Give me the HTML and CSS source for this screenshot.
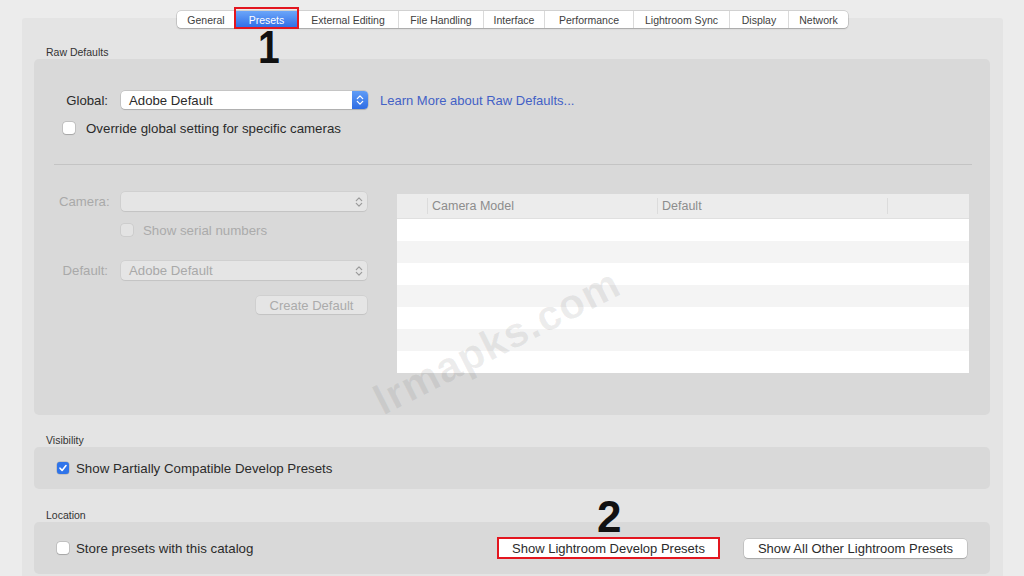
FILE: index.html
```html
<!DOCTYPE html>
<html>
<head>
<meta charset="utf-8">
<link rel="stylesheet" href="styles.css">
</head>
<body>
<div class="page">
  <div class="tabs">
    <div class="tab w-general">General</div>
    <div class="tab active w-presets">Presets</div>
    <div class="tab w-ext">External Editing</div>
    <div class="tab w-file">File Handling</div>
    <div class="tab w-iface">Interface</div>
    <div class="tab w-perf">Performance</div>
    <div class="tab w-sync">Lightroom Sync</div>
    <div class="tab w-disp">Display</div>
    <div class="tab w-net">Network</div>
  </div>
  <div class="window">
    <div class="section-label">Raw Defaults</div>
    <div class="group raw">
      <div class="global-row">
        <span class="lbl">Global:</span>
        <div class="select primary">
          <span class="sel-text">Adobe Default</span>
          <span class="stepper blue"><svg width="8" height="12" viewBox="0 0 8 12"><path d="M1.3 4.6 L4 1.9 L6.7 4.6 M1.3 7.4 L4 10.1 L6.7 7.4" fill="none" stroke="#fff" stroke-width="1.3" stroke-linecap="round" stroke-linejoin="round"/></svg></span>
        </div>
        <span class="link">Learn More about Raw Defaults...</span>
      </div>
      <div class="check-row override"><span class="cb"></span><span>Override global setting for specific cameras</span></div>
      <div class="sep"></div>
      <div class="cameras">
        <div class="cam-form">
          <span class="lbl dis">Camera:</span>
          <div class="select disabled">
            <span class="sel-text"></span>
            <span class="stepper"><svg width="8" height="12" viewBox="0 0 8 12"><path d="M1.3 4.6 L4 1.9 L6.7 4.6 M1.3 7.4 L4 10.1 L6.7 7.4" fill="none" stroke="#9a9a9a" stroke-width="1.2" stroke-linecap="round" stroke-linejoin="round"/></svg></span>
          </div>
          <span></span>
          <div class="check-row serial dis"><span class="cb dis-cb"></span><span>Show serial numbers</span></div>
          <span class="lbl dis def-lbl">Default:</span>
          <div class="select disabled def-sel">
            <span class="sel-text">Adobe Default</span>
            <span class="stepper"><svg width="8" height="12" viewBox="0 0 8 12"><path d="M1.3 4.6 L4 1.9 L6.7 4.6 M1.3 7.4 L4 10.1 L6.7 7.4" fill="none" stroke="#9a9a9a" stroke-width="1.2" stroke-linecap="round" stroke-linejoin="round"/></svg></span>
          </div>
          <span></span>
          <div class="btn-row"><div class="btn dis-btn">Create Default</div></div>
        </div>
        <div class="table">
          <div class="thead">
            <div class="th c0"></div>
            <div class="th c1">Camera Model</div>
            <div class="th c2">Default</div>
            <div class="th c3"></div>
          </div>
          <div class="tr"></div>
          <div class="tr alt"></div>
          <div class="tr"></div>
          <div class="tr alt"></div>
          <div class="tr"></div>
          <div class="tr alt"></div>
          <div class="tr"></div>
        </div>
      </div>
    </div>
    <div class="section-label vis-label">Visibility</div>
    <div class="group vis">
      <div class="check-row"><span class="cb checked"><svg width="10" height="10" viewBox="0 0 10 10"><path d="M2 5.2 L4.1 7.4 L8 2.6" fill="none" stroke="#fff" stroke-width="1.6" stroke-linecap="round" stroke-linejoin="round"/></svg></span><span>Show Partially Compatible Develop Presets</span></div>
    </div>
    <div class="section-label loc-label">Location</div>
    <div class="group loc">
      <div class="check-row"><span class="cb"></span><span>Store presets with this catalog</span></div>
      <div class="loc-buttons">
        <div class="btn big marked">Show Lightroom Develop Presets</div>
        <div class="btn big">Show All Other Lightroom Presets</div>
      </div>
    </div>
  </div>
  <div class="annot n1">1</div>
  <div class="annot n2">2</div>
  <div class="watermark">lrmapks.com</div>
</div>
</body>
</html>
```

FILE: styles.css
```css
* { box-sizing: border-box; }
html, body { margin: 0; padding: 0; }
body {
  background: #ececec;
  font-family: "Liberation Sans", Arial, sans-serif;
  color: #2b2b2b;
  width: 1024px;
  height: 576px;
  overflow: hidden;
}
.page {
  position: relative;
  padding-top: 11px;
  height: 576px;
}
.tabs {
  position: relative;
  z-index: 2;
  display: flex;
  margin-left: 177px;
  width: 671px;
  height: 17px;
  background: #fff;
  border-radius: 4px;
  box-shadow: 0 0 0 0.5px rgba(0,0,0,0.22), 0 1px 1.5px rgba(0,0,0,0.18);
}
.tab {
  display: flex;
  align-items: center;
  justify-content: center;
  font-size: 10.5px;
  color: #404040;
  border-left: 1px solid #dadada;
  height: 100%;
}
.tab:first-child { border-left: none; }
.tab.active {
  position: relative;
  background: linear-gradient(#6ba6f9, #2e6ce6);
  color: #fff;
  border-left: none;
}
.tab.active + .tab { border-left: none; }
.tab.active::after {
  content: "";
  position: absolute;
  left: -1px; right: -1px; top: -4px; bottom: -1px;
  border: 2px solid #e3161f;
}
.w-general { width: 58px; }
.w-presets { width: 63px; }
.w-ext { width: 100px; }
.w-file { width: 85px; }
.w-iface { width: 61px; }
.w-perf { width: 89px; }
.w-sync { width: 96px; }
.w-disp { width: 59px; }
.w-net { width: 60px; }

.window {
  margin: -10px 21px 0 22px;
  background: #e4e4e4;
  padding: 28px 13px 0 12px;
  height: 570px;
  border-radius: 3px;
}
.section-label {
  font-size: 10.5px;
  color: #333;
  height: 13px;
  line-height: 13px;
  padding-left: 12px;
}
.vis-label { margin-top: 19px; }
.loc-label { margin-top: 20px; }
.group {
  background: #d9d9d9;
  border-radius: 5px;
}
.raw {
  padding: 32px 21px 42px 25px;
  height: 356px;
}
.lbl {
  width: 49px;
  text-align: right;
  font-size: 13.2px;
  color: #2b2b2b;
  white-space: nowrap;
}
.lbl.dis { color: #a9a9a9; }
.global-row {
  display: flex;
  align-items: center;
  height: 18px;
  gap: 13px;
}
.select {
  display: flex;
  align-items: center;
  background: #fff;
  border-radius: 4px;
  height: 18px;
  box-shadow: 0 0 0 0.5px rgba(0,0,0,0.18), 0 1px 1px rgba(0,0,0,0.12);
  font-size: 13.2px;
}
.select.primary { width: 247px; }
.sel-text { flex: 1; padding-left: 8px; }
.stepper {
  width: 16px;
  height: 100%;
  display: flex;
  align-items: center;
  justify-content: center;
}
.stepper.blue {
  background: linear-gradient(#5f9cf6, #2f6de4);
  border-radius: 0 4px 4px 0;
}
.link {
  color: #4361c6;
  font-size: 13px;
  margin-left: -1px;
}
.check-row {
  display: flex;
  align-items: center;
  gap: 11px;
  font-size: 13.3px;
  height: 14px;
  white-space: nowrap;
}
.override { margin-top: 12px; padding-left: 4px; }
.cb {
  width: 12px;
  height: 12px;
  background: #fff;
  border-radius: 3px;
  box-shadow: 0 0 0 0.5px rgba(0,0,0,0.2), 0 0.5px 1px rgba(0,0,0,0.15);
  display: flex;
  align-items: center;
  justify-content: center;
  flex-shrink: 0;
}
.cb.checked {
  background: #2f74ea;
  box-shadow: 0 0 0 0.5px rgba(0,0,0,0.2);
}
.cb.dis-cb { background: #e3e3e3; box-shadow: 0 0 0 0.5px rgba(0,0,0,0.1); }
.sep {
  height: 1px;
  background: #c4c4c4;
  margin: 29px -3px 0 -5px;
}
.cameras {
  display: flex;
  margin-top: 29px;
  gap: 30px;
}
.cam-form {
  display: grid;
  grid-template-columns: 49px 246px;
  column-gap: 13px;
  align-content: start;
  margin-top: -2px;
}
.cam-form .lbl { align-self: center; }
.select.disabled {
  background: #e5e5e5;
  box-shadow: 0 0 0 0.5px rgba(0,0,0,0.08), 0 1px 1px rgba(0,0,0,0.06);
  color: #a9a9a9;
  height: 19px;
}
.serial {
  margin-top: 12px;
  height: 14px;
  gap: 10px;
}
.dis { color: #ababab; }
.def-lbl, .def-sel { margin-top: 24px; }
.btn-row {
  display: flex;
  justify-content: flex-end;
  margin-top: 16px;
}
.btn {
  display: flex;
  align-items: center;
  justify-content: center;
  font-size: 13px;
  border-radius: 4px;
  white-space: nowrap;
}
.dis-btn {
  width: 111px;
  height: 18px;
  background: #e5e5e5;
  color: #ababab;
  box-shadow: 0 0 0 0.5px rgba(0,0,0,0.08), 0 1px 1px rgba(0,0,0,0.06);
}
.table {
  width: 572px;
  height: 179px;
  background: #fff;
  overflow: hidden;
}
.thead {
  display: flex;
  height: 25px;
  background: #ececec;
  border-bottom: 1px solid #e0e0e0;
}
.th {
  font-size: 12.5px;
  color: #8d8d8d;
  display: flex;
  align-items: center;
  padding-left: 4px;
  border-left: 1px solid #dcdcdc;
  margin: 4px 0;
}
.th.c0 { width: 30px; border-left: none; }
.th.c1 { width: 230px; }
.th.c2 { width: 230px; }
.th.c3 { flex: 1; }
.tr { height: 22px; background: #fff; }
.tr.alt { background: #f4f4f4; }

.vis {
  height: 42px;
  padding-left: 23px;
  display: flex;
  align-items: center;
}
.vis .check-row { gap: 7px; }
.loc {
  height: 52px;
  padding: 0 23px;
  display: flex;
  align-items: center;
  justify-content: space-between;
}
.loc .check-row { gap: 7px; }
.loc-buttons {
  display: flex;
  gap: 24px;
  align-items: center;
}
.btn.big {
  height: 19px;
  width: 223px;
  background: #fff;
  color: #2b2b2b;
  box-shadow: 0 0 0 0.5px rgba(0,0,0,0.18), 0 1px 1px rgba(0,0,0,0.15);
}
.btn.marked {
  height: 22px;
  border: 2px solid #e3161f;
  border-radius: 0;
  box-shadow: none;
}
.annot {
  position: absolute;
  font-family: "Liberation Sans", Arial, sans-serif;
  font-weight: bold;
  color: #111;
  line-height: 0.78;
}
.n1 { left: 256px; top: 30px; font-size: 46px; transform: scaleX(0.85); }
.n2 { left: 597px; top: 500px; font-size: 44px; }
.watermark {
  position: absolute;
  left: 362px;
  top: 318px;
  font-size: 42px;
  font-weight: bold;
  color: rgba(60,60,60,0.09);
  transform: rotate(-27deg);
  transform-origin: center;
  white-space: nowrap;
  letter-spacing: 1px;
}
```
